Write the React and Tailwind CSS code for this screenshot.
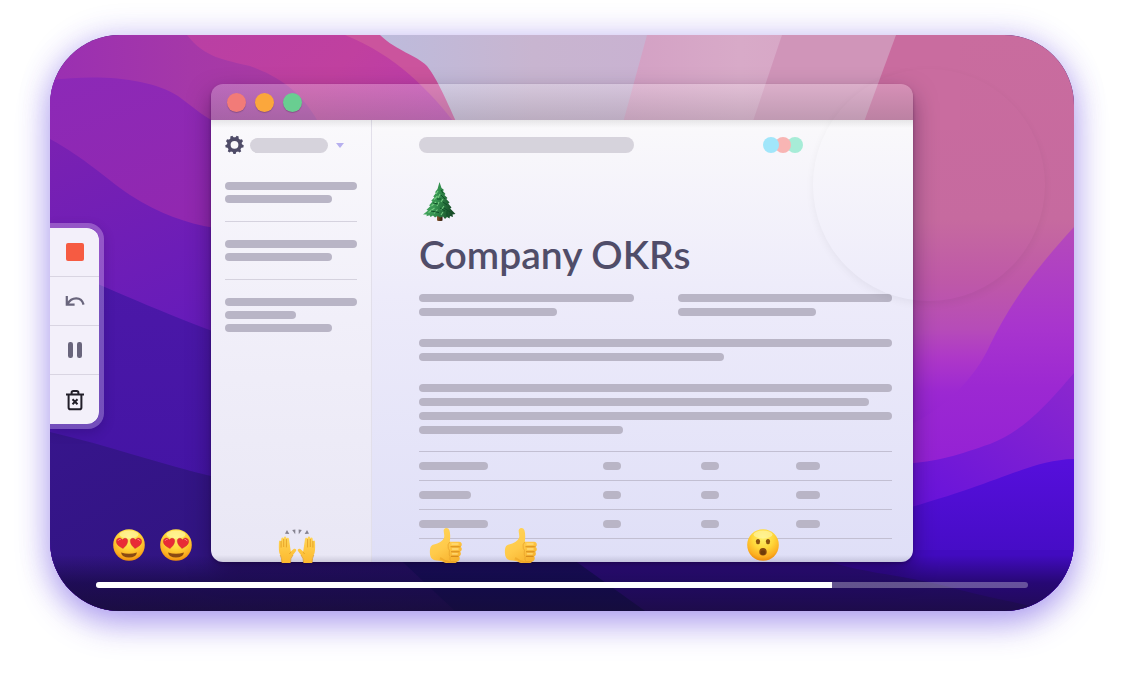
import React from "react";

const REACTIONS = [
  { kind: "love", at: 7.7 },
  { kind: "love", at: 12.3 },
  { kind: "hands", at: 24.1 },
  { kind: "thumb", at: 38.7 },
  { kind: "thumb", at: 46 },
  { kind: "wow", at: 69.6 },
];

function Wallpaper() {
  return (
    <svg
      className="absolute inset-0 h-full w-full"
      viewBox="50 35 1024 576"
      preserveAspectRatio="none"
      aria-hidden="true"
    >
      <defs>
        <linearGradient id="w0" x1="0" y1="0" x2="1" y2="0">
          <stop offset="0" stopColor="#9a2fb2" />
          <stop offset="0.25" stopColor="#a538a8" />
          <stop offset="0.4" stopColor="#a93ba4" />
        </linearGradient>
        <linearGradient id="w1" x1="0" y1="0" x2="1" y2="0.6">
          <stop offset="0" stopColor="#b93fa4" />
          <stop offset="0.4" stopColor="#c0409f" />
          <stop offset="1" stopColor="#b737b4" />
        </linearGradient>
        <linearGradient id="w2" x1="0" y1="0" x2="0.4" y2="1">
          <stop offset="0" stopColor="#8c29b7" />
          <stop offset="0.3" stopColor="#9128b0" />
          <stop offset="1" stopColor="#8824ac" />
        </linearGradient>
        <linearGradient id="w3" x1="0" y1="0" x2="0.5" y2="1">
          <stop offset="0" stopColor="#7a21b2" />
          <stop offset="0.5" stopColor="#621abb" />
          <stop offset="1" stopColor="#5b18bc" />
        </linearGradient>
        <linearGradient id="w4" x1="0" y1="0" x2="0" y2="1">
          <stop offset="0" stopColor="#4c18a8" />
          <stop offset="1" stopColor="#3f12a2" />
        </linearGradient>
        <linearGradient id="w5" x1="0" y1="0" x2="1" y2="0.6">
          <stop offset="0" stopColor="#37158c" />
          <stop offset="1" stopColor="#2b1478" />
        </linearGradient>
        <linearGradient id="p0" x1="0" y1="0" x2="1" y2="0">
          <stop offset="0" stopColor="#bdbbdc" />
          <stop offset="0.45" stopColor="#c8b5d0" />
          <stop offset="1" stopColor="#c9b0d2" />
        </linearGradient>
        <linearGradient id="p1" x1="0" y1="0" x2="1" y2="0">
          <stop offset="0" stopColor="#d3a0c4" />
          <stop offset="0.5" stopColor="#d8aac8" />
          <stop offset="1" stopColor="#d6a4c4" />
        </linearGradient>
        <linearGradient id="r0" x1="0" y1="0" x2="0" y2="1">
          <stop offset="0" stopColor="#c96c9e" />
          <stop offset="0.32" stopColor="#c66a9f" />
          <stop offset="0.43" stopColor="#be58a8" />
          <stop offset="0.51" stopColor="#b64cb8" />
          <stop offset="0.56" stopColor="#ae38c8" />
          <stop offset="0.62" stopColor="#9c28d2" />
          <stop offset="0.75" stopColor="#8c1cd4" />
        </linearGradient>
        <linearGradient id="r1" x1="0" y1="0" x2="0" y2="1">
          <stop offset="0" stopColor="#b54aba" />
          <stop offset="0.35" stopColor="#a834ce" />
          <stop offset="0.55" stopColor="#9c28d2" />
          <stop offset="1" stopColor="#8e1cd6" />
        </linearGradient>
        <linearGradient id="r2" x1="1" y1="0" x2="0.4" y2="1">
          <stop offset="0" stopColor="#8c28ce" />
          <stop offset="1" stopColor="#6411dc" />
        </linearGradient>
        <linearGradient id="r3" x1="0" y1="0" x2="0" y2="1">
          <stop offset="0" stopColor="#560fdc" />
          <stop offset="1" stopColor="#3c0bb8" />
        </linearGradient>
      </defs>
      <rect x="50" y="35" width="560" height="576" fill="url(#w0)" />
      <path d="M187 35C205 58 225 60 250 66C288 80 305 98 320 125L520 250V35Z" fill="url(#w1)" />
      <path d="M345 35C395 55 430 90 460 130L480 120L440 35Z" fill="#cb549d" />
      <path d="M50 80C100 74 150 78 178 96C192 106 200 114 215 122L600 300V611H50Z" fill="url(#w2)" />
      <path d="M50 139C85 158 105 178 130 195C160 214 185 223 215 228L600 400V611H50Z" fill="url(#w3)" />
      <path d="M50 264C100 284 150 308 215 332L600 440V611H50Z" fill="url(#w4)" />
      <path d="M50 432C110 446 160 464 215 477L600 520V611H50Z" fill="url(#w5)" />
      <path d="M600 35H1074V611H600Z" fill="url(#r0)" />
      <path d="M380 35C398 52 415 54 427 66C438 80 446 100 460 130H720V35Z" fill="url(#p0)" />
      <path d="M647 35L621 130H860L800 35Z" fill="url(#p1)" />
      <path d="M782 35L750 130H880L900 35Z" fill="#d095b9" />
      <path d="M896 35L861 130H960V35Z" fill="#c96c9f" />
      <path d="M1074 227C1030 275 1008 308 990 345C975 378 945 410 900 430V520H1074Z" fill="url(#r1)" />
      <path d="M1074 373C1040 413 1020 432 990 444C960 454 940 462 900 464V560H1074Z" fill="url(#r2)" />
      <path d="M1074 459C1030 460 1000 483 900 510V611H1074Z" fill="url(#r3)" />
      <path d="M390 550L455 611H660L575 550Z" fill="#1c126e" />
      <path d="M560 550H1074V611H645Z" fill="#38109c" />
      <path d="M800 550C850 575 900 572 960 590C1000 600 1030 605 1050 611H1074V550Z" fill="#420bc0" />
    </svg>
  );
}

function Bar({ className }) {
  return <span className={`block h-2 rounded-full bg-[#b9b5c6] ${className}`} />;
}

function Gear() {
  const teeth = [0, 40, 80, 120, 160, 200, 240, 280, 320];
  return (
    <svg className="h-5 w-5" viewBox="0 0 20 20" aria-hidden="true">
      <circle cx="9.5" cy="9.8" r="5.7" fill="none" stroke="#4f4c68" strokeWidth="3.6" />
      {teeth.map((a) => (
        <path key={a} d="M7.6 3.2L8.4 0.6H10.6L11.4 3.2Z" fill="#4f4c68" transform={`rotate(${a + 20} 9.5 9.8)`} />
      ))}
    </svg>
  );
}

function Tree() {
  return (
    <svg className="block h-[41px] w-[41px]" viewBox="0 0 41 41" role="img" aria-label="Evergreen tree">
      <defs>
        <linearGradient id="leaf" x1="0" y1="0" x2="1" y2="0.2">
          <stop offset="0" stopColor="#52b46c" />
          <stop offset="0.5" stopColor="#34924f" />
          <stop offset="1" stopColor="#174d28" />
        </linearGradient>
        <linearGradient id="trunk" x1="0" y1="0" x2="1" y2="0">
          <stop offset="0" stopColor="#8a5a30" />
          <stop offset="1" stopColor="#2c160a" />
        </linearGradient>
      </defs>
      <path d="M18 33H23.5V39.5Q21 40.5 18 39.5Z" fill="url(#trunk)" />
      <path
        d="M20.5 1L22.5 7L25 9L23.8 10L26.5 13L25.4 14L28.5 17L27.3 18L30.6 21.5L29.2 22.5L32.5 26.5L31.2 27.4L36.5 33L33.5 33.6L34 36L31 35L30.5 37.5L28 36L26 38L24 35.5L21 36.5L18.5 35L16 36.5L14 34.6L11.5 36L10.5 34.2L7.5 35.2L7.8 33.4L4 33.6L9 29.5L7.5 28.8L11.5 25L10 24.4L13.5 20.5L12.2 19.8L15.5 16.2L14.2 15.4L17 12L16 11.2L18.5 8Z"
        fill="url(#leaf)"
      />
      <path
        d="M19 10L17 13M18.5 15L15 18.5M17 21L12.5 25M15.5 27L9.5 31.5M21 13L19 17M20 21L18 25M18.5 28.5L15 32.5M24 18L22 21M25 25L22 29M24 31L22 34"
        stroke="#74ca80"
        strokeWidth="1.1"
        fill="none"
      />
      <path
        d="M22 9L24 12M22 14L26 18M24 21L28 24M25 27L31 31M14 22L19 23M12 30L20 31.5M18 18L22 18M28 30L28 35M21 27L26 30"
        stroke="#0f5228"
        strokeWidth="1"
        fill="none"
      />
    </svg>
  );
}

function Face({ kind }) {
  return (
    <svg className="block h-8 w-8" viewBox="0 0 32 32" role="img" aria-label={kind === "love" ? "Heart eyes" : "Surprised"}>
      <defs>
        <radialGradient id={`face-${kind}`} cx="0.5" cy="0.28" r="0.74">
          <stop offset="0" stopColor="#fff06a" />
          <stop offset="0.45" stopColor="#ffd83b" />
          <stop offset="0.8" stopColor="#fcae20" />
          <stop offset="1" stopColor="#e98508" />
        </radialGradient>
      </defs>
      <circle cx="16" cy="16" r="15.8" fill={`url(#face-${kind})`} />
      <ellipse cx="16" cy="5.5" rx="9.5" ry="4" fill="#fff8b0" opacity="0.6" />
      {kind === "love" ? (
        <>
          <path d="M8 23.5Q16 26 24 23.5Q23 28.6 16 28.6Q9 28.6 8 23.5Z" fill="#8a4a12" />
          <g fill="#e92c36" stroke="#bd2230" strokeWidth="0.4">
            <path d="M10 19.5C5 17 3 14.5 3.4 11.8C4 8.6 8 8 9.3 11C11.4 8 15 9.2 14.7 12.3C14.4 15.2 12.5 17.4 10 19.5Z" />
            <path d="M22 19.5C27 17 29 14.5 28.6 11.8C28 8.6 24 8 22.7 11C20.6 8 17 9.2 17.3 12.3C17.6 15.2 19.5 17.4 22 19.5Z" />
          </g>
          <path d="M5.2 11.5Q6 10 7.4 10.2M24.8 10.2Q26.3 10.2 27 11.8" stroke="#ff8285" strokeWidth="1" fill="none" strokeLinecap="round" />
        </>
      ) : (
        <>
          <ellipse cx="11" cy="12.6" rx="2.1" ry="2.7" fill="#8a5210" />
          <ellipse cx="21" cy="12.6" rx="2.1" ry="2.7" fill="#8a5210" />
          <ellipse cx="16" cy="22.8" rx="3.7" ry="3.8" fill="#87480e" />
          <ellipse cx="16" cy="23.6" rx="2.4" ry="2.4" fill="#6f3b09" />
        </>
      )}
    </svg>
  );
}

function Thumb() {
  return (
    <svg className="block h-9 w-[35px]" viewBox="0 0 35 36" role="img" aria-label="Thumbs up">
      <defs>
        <linearGradient id="thumb" x1="0" y1="0" x2="0.6" y2="1">
          <stop offset="0" stopColor="#ffd65a" />
          <stop offset="0.6" stopColor="#ffca4a" />
          <stop offset="1" stopColor="#f8b430" />
        </linearGradient>
      </defs>
      <path
        d="M15.6 2.2C17 0.4 20.2 0.8 21 3.6C21.8 6.5 22 10 21.3 14.8H30.6C34 15 34 19 31.8 19.8C34 20.8 33.6 24 31.6 24.8C33 26 32.4 28.8 30.6 29.4C32 31 31 34 29 34.4L27 36H19C15 35.8 14 33.6 9 33.4C4 33.6 1.6 31 1.4 26C1.2 20.5 2.5 18 5.5 17.6C10 16.6 14.4 14.4 15.6 10.6C16.2 8.6 15.2 6 15.2 4Q15 3 15.6 2.2Z"
        fill="url(#thumb)"
      />
      <path
        d="M22 19.7H31.4M22.5 24.7H31M22.5 29.4H30"
        fill="none"
        stroke="#d88c1c"
        strokeWidth="1.1"
      />
      <path
        d="M21.3 14.9Q18.6 17.4 19.8 21.4Q21.6 23 20.8 25.4Q20.4 28 21.6 29.6Q20.8 32.4 22.4 34.6M32.6 19Q31.8 19.8 30.6 19.8M28 34.5H22.6"
        fill="none"
        stroke="#e8a42c"
        strokeWidth="0.8"
      />
      <path d="M23.5 17H29.6M24 22H29.6M24 26.8H28.8" stroke="#ffdc7a" strokeWidth="1.3" fill="none" strokeLinecap="round" />
      <path d="M11 32.4Q14 32.2 17 35L20 36H27L28.8 34.6H22Q16 33.5 12 30Z" fill="#e79b1e" opacity="0.5" />
    </svg>
  );
}

function Hands() {
  return (
    <svg className="block h-9 w-[38px]" viewBox="0 0 38 36" role="img" aria-label="Raised hands">
      <defs>
        <linearGradient id="hand" x1="0" y1="0" x2="0" y2="1">
          <stop offset="0" stopColor="#ffd558" />
          <stop offset="1" stopColor="#fdb92d" />
        </linearGradient>
      </defs>
      <g fill="#868390">
        <path d="M7 6.8L9 3L11.3 7Z" />
        <path d="M14.2 3L17.4 2.4L17.2 7.2Z" />
        <path d="M20.6 2.4L23.8 3L20.8 7.2Z" />
        <path d="M31 6.8L29 3L26.7 7Z" />
      </g>
      {["", "translate(38 0) scale(-1 1)"].map((t) => (
        <g key={t} transform={t}>
          <path
            d="M3.8 36C3.9 31 3.4 30 1.8 27C0.6 24.6 0.8 17.5 1 14.4C1.2 13 2.8 13.2 3 14.4L3.4 11.6C3.6 10.2 5.4 10.2 5.6 11.6L5.9 10.4C6.2 9 8 9.2 8.2 10.6L8.5 11.6C8.9 10.4 10.8 10.6 11 12L12.8 24.6L15.6 22C17.4 21 18.9 22.6 18 24L14.8 28.2C12.6 31 12.4 32 12.4 36Z"
            fill="url(#hand)"
          />
          <path d="M3.1 14V20.5M5.7 12V20M8.4 12V20.4M3.9 35.5Q3.8 31 2.2 28M12.8 25.2L11.4 27M12.4 35.8Q12.2 31.5 15 28" stroke="#dd941b" strokeWidth="0.7" fill="none" />
        </g>
      ))}
    </svg>
  );
}

function Reaction({ kind }) {
  if (kind === "thumb") return <Thumb />;
  if (kind === "hands") return <Hands />;
  return <Face kind={kind} />;
}

function ToolButton({ label, children }) {
  return (
    <button type="button" aria-label={label} className="flex h-[49px] w-[49px] items-center justify-center">
      {children}
    </button>
  );
}

function Toolbar() {
  return (
    <div
      role="toolbar"
      aria-label="Recording controls"
      className="absolute top-[188px] left-0 rounded-r-2xl border-y-5 border-r-5 border-white/25 bg-clip-padding shadow-[0_4px_12px_rgba(20,0,60,0.2)]"
    >
      <div className="divide-y divide-[#d9d5e2] rounded-r-xl bg-[#f3f0fa]">
        <ToolButton label="Stop">
          <span className="h-[18px] w-[18px] rounded-xs bg-[#f65b42]" />
        </ToolButton>
        <ToolButton label="Restart">
          <svg className="h-5 w-5" viewBox="0 0 20 20" fill="none" stroke="#69657c" strokeWidth="2.2">
            <path d="M1.8 5V13.6H9.6M2.4 13C6.5 5.8 16.2 4.8 18.6 13.6" />
          </svg>
        </ToolButton>
        <ToolButton label="Pause">
          <svg className="h-5 w-5" viewBox="0 0 20 20" fill="#69657c">
            <rect x="3" y="2" width="5" height="16" rx="2.2" />
            <rect x="12" y="2" width="5" height="16" rx="2.2" />
          </svg>
        </ToolButton>
        <ToolButton label="Delete">
          <svg className="h-[22px] w-[22px]" viewBox="0 0 22 22" fill="none" stroke="#211e29" strokeWidth="2" strokeLinejoin="round">
            <path d="M2 5.6H20M4.6 5.6V18.4Q4.6 20.2 6.4 20.2H15.6Q17.4 20.2 17.4 18.4V5.6M7.6 5.4V3.8Q7.6 2 9.4 2H12.6Q14.4 2 14.4 3.8V5.4" />
            <path d="M8.5 10.2L13.5 15.2M13.5 10.2L8.5 15.2" />
          </svg>
        </ToolButton>
      </div>
    </div>
  );
}

function TitleBar() {
  return (
    <div className="relative flex h-9 items-center gap-[9px] rounded-t-xl bg-linear-to-b from-white/25 to-[#a8a0a8]/40 px-4">
      <span className="h-[19px] w-[19px] rounded-full bg-[#f27b78] shadow-[0_1px_1px_rgba(0,0,0,0.2)]" />
      <span className="h-[19px] w-[19px] rounded-full bg-[#fba73c] shadow-[0_1px_1px_rgba(0,0,0,0.2)]" />
      <span className="h-[19px] w-[19px] rounded-full bg-[#69ce91] shadow-[0_1px_1px_rgba(0,0,0,0.2)]" />
      <div className="absolute inset-x-0 top-full h-2 bg-linear-to-b from-black/8 to-transparent" />
    </div>
  );
}

function Sidebar() {
  return (
    <aside className="w-[161px] shrink-0 rounded-bl-xl border-r border-[#e2dfea] bg-linear-to-b from-[#faf9fc] via-[#f1eff9] via-45% to-[#e9e7f5] px-3.5 pt-[15px]">
      <div className="flex items-center">
        <Gear />
        <span className="ml-[5px] h-[15px] w-[78px] rounded-full bg-[#d6d3dc]" />
        <svg className="ml-2 h-[5px] w-2" viewBox="0 0 8 5" aria-hidden="true">
          <path d="M0 0H8L4 5Z" fill="#b7b0ef" />
        </svg>
      </div>
      <div className="mt-[27px] divide-y divide-[#d5d2de]">
        <div className="flex flex-col gap-[5px] pb-[18px]">
          <Bar className="w-full" />
          <Bar className="w-[107px]" />
        </div>
        <div className="flex flex-col gap-[5px] py-[18px]">
          <Bar className="w-full" />
          <Bar className="w-[107px]" />
        </div>
        <div className="flex flex-col gap-[5px] py-[18px]">
          <Bar className="w-full" />
          <Bar className="w-[71px]" />
          <Bar className="w-[107px]" />
        </div>
      </div>
    </aside>
  );
}

function Document() {
  const firstCells = ["w-[69px]", "w-[52px]", "w-[69px]"];
  return (
    <main className="min-w-0 flex-1 rounded-br-xl bg-linear-to-b from-[#faf9fb] via-[#edebfa] via-40% to-[#dfdff7] pt-[17px] pr-[21px] pb-[23px] pl-[47px]">
      <div className="flex items-center justify-between pr-[89px]">
        <span className="h-4 w-[215px] rounded-full bg-[#d6d3dc]" />
        <div className="flex -space-x-1">
          <span className="relative z-20 h-4 w-4 rounded-full bg-[#a1e6fa]" />
          <span className="relative z-10 h-4 w-4 rounded-full bg-[#f8b5b4]" />
          <span className="h-4 w-4 rounded-full bg-[#a7ecd7]" />
        </div>
      </div>
      <div className="mt-7">
        <Tree />
      </div>
      <h1 className="mt-3 font-['Lato',sans-serif] text-[39px] leading-10 font-semibold whitespace-nowrap text-[#504d69]">
        Company OKRs
      </h1>
      <div className="mt-5 grid grid-cols-2 gap-11">
        <div className="flex flex-col gap-1.5">
          <Bar className="w-full" />
          <Bar className="w-[138px]" />
        </div>
        <div className="flex flex-col gap-1.5">
          <Bar className="w-full" />
          <Bar className="w-[138px]" />
        </div>
      </div>
      <div className="mt-[23px] flex flex-col gap-1.5">
        <Bar className="w-full" />
        <Bar className="w-[305px]" />
      </div>
      <div className="mt-[23px] flex flex-col gap-1.5">
        <Bar className="w-full" />
        <Bar className="w-[450px]" />
        <Bar className="w-full" />
        <Bar className="w-[204px]" />
      </div>
      <table className="mt-[17px] w-full table-fixed border-b border-[#c2bfd2]">
        <colgroup>
          <col className="w-[184px]" />
          <col className="w-[98px]" />
          <col className="w-[95px]" />
          <col />
        </colgroup>
        <tbody>
          {firstCells.map((w, i) => (
            <tr key={i} className="h-[29px] border-t border-[#c2bfd2]">
              <td className="p-0 align-middle"><Bar className={w} /></td>
              <td className="p-0 align-middle"><Bar className="w-[18px]" /></td>
              <td className="p-0 align-middle"><Bar className="w-[18px]" /></td>
              <td className="p-0 align-middle"><Bar className="w-6" /></td>
            </tr>
          ))}
        </tbody>
      </table>
    </main>
  );
}

export default function App() {
  return (
    <div className="bg-white px-[50px] pt-[35px] pb-[66px]">
      <section className="relative overflow-hidden rounded-[70px] bg-[#2b1478] pt-[49px] shadow-[0_14px_32px_rgba(88,56,222,0.4),0_0_32px_rgba(88,56,222,0.22)]">
        <Wallpaper />

        <div className="relative mx-[161px] rounded-xl shadow-[0_10px_24px_-2px_rgba(20,0,40,0.5),0_2px_3px_rgba(20,0,40,0.3)]">
          <TitleBar />
          <div className="flex">
            <Sidebar />
            <Document />
          </div>
        </div>

        <div className="absolute top-[34px] right-[29px] h-[232px] w-[232px] rounded-full shadow-[0_3px_8px_rgba(0,0,0,0.05)]" />
        <div className="absolute inset-x-0 bottom-0 h-14 bg-linear-to-b from-transparent via-[#0b0528]/50 via-50% to-[#120a28]/70" />
        <div className="absolute inset-x-0 bottom-12 h-9 overflow-hidden">
          {REACTIONS.map((r, i) => (
            <div key={i} className="absolute top-0 flex h-9 -translate-x-1/2 items-center" style={{ left: `${r.at}%` }}>
              <Reaction kind={r.kind} />
            </div>
          ))}
        </div>

        <div className="relative mx-[46px] pt-5 pb-[23px]">
          <progress
            aria-label="Playback position"
            value={79}
            max={100}
            className="block h-1.5 w-full appearance-none overflow-hidden rounded-full [&::-webkit-progress-bar]:bg-white/30 [&::-webkit-progress-value]:bg-white"
          />
        </div>

        <Toolbar />
      </section>
    </div>
  );
}
